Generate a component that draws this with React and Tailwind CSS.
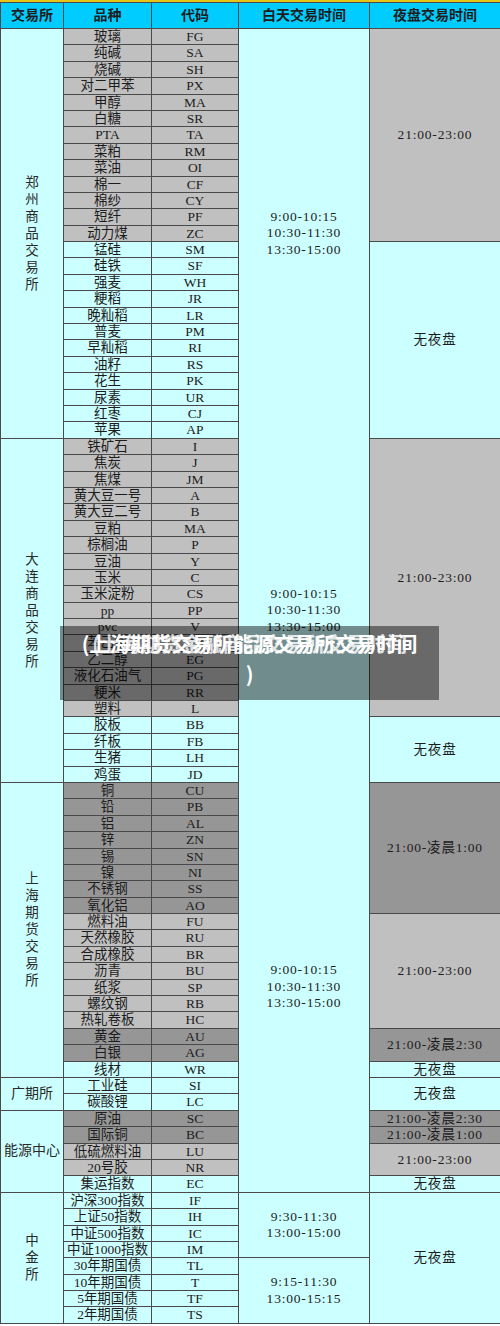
import React from 'react'

const BG = {
  g: 'bg-[#c0c0c0]',
  d: 'bg-[#969696]',
  c: 'bg-[#ccffff]',
}

const EXCHANGES = [
  {
    name: '郑州商品交易所',
    vertical: true,
    rows: [
      ['玻璃', 'FG', 'g'], ['纯碱', 'SA', 'g'], ['烧碱', 'SH', 'g'], ['对二甲苯', 'PX', 'g'],
      ['甲醇', 'MA', 'g'], ['白糖', 'SR', 'g'], ['PTA', 'TA', 'g'], ['菜粕', 'RM', 'g'],
      ['菜油', 'OI', 'g'], ['棉一', 'CF', 'g'], ['棉纱', 'CY', 'g'], ['短纤', 'PF', 'g'],
      ['动力煤', 'ZC', 'g'], ['锰硅', 'SM', 'c'], ['硅铁', 'SF', 'c'], ['强麦', 'WH', 'c'],
      ['粳稻', 'JR', 'c'], ['晚籼稻', 'LR', 'c'], ['普麦', 'PM', 'c'], ['早籼稻', 'RI', 'c'],
      ['油籽', 'RS', 'c'], ['花生', 'PK', 'c'], ['尿素', 'UR', 'c'], ['红枣', 'CJ', 'c'],
      ['苹果', 'AP', 'c'],
    ],
  },
  {
    name: '大连商品交易所',
    vertical: true,
    rows: [
      ['铁矿石', 'I', 'g'], ['焦炭', 'J', 'g'], ['焦煤', 'JM', 'g'], ['黄大豆一号', 'A', 'g'],
      ['黄大豆二号', 'B', 'g'], ['豆粕', 'MA', 'g'], ['棕榈油', 'P', 'g'], ['豆油', 'Y', 'g'],
      ['玉米', 'C', 'g'], ['玉米淀粉', 'CS', 'g'], ['pp', 'PP', 'g'], ['pvc', 'V', 'g'],
      ['苯乙烯', 'EB', 'g'], ['乙二醇', 'EG', 'g'], ['液化石油气', 'PG', 'g'], ['粳米', 'RR', 'g'],
      ['塑料', 'L', 'g'], ['胶板', 'BB', 'c'], ['纤板', 'FB', 'c'], ['生猪', 'LH', 'c'],
      ['鸡蛋', 'JD', 'c'],
    ],
  },
  {
    name: '上海期货交易所',
    vertical: true,
    rows: [
      ['铜', 'CU', 'd'], ['铅', 'PB', 'd'], ['铝', 'AL', 'd'], ['锌', 'ZN', 'd'],
      ['锡', 'SN', 'd'], ['镍', 'NI', 'd'], ['不锈钢', 'SS', 'd'], ['氧化铝', 'AO', 'd'],
      ['燃料油', 'FU', 'g'], ['天然橡胶', 'RU', 'g'], ['合成橡胶', 'BR', 'g'], ['沥青', 'BU', 'g'],
      ['纸浆', 'SP', 'g'], ['螺纹钢', 'RB', 'g'], ['热轧卷板', 'HC', 'g'], ['黄金', 'AU', 'd'],
      ['白银', 'AG', 'd'], ['线材', 'WR', 'c'],
    ],
  },
  {
    name: '广期所',
    vertical: false,
    rows: [['工业硅', 'SI', 'c'], ['碳酸锂', 'LC', 'c']],
  },
  {
    name: '能源中心',
    vertical: false,
    rows: [
      ['原油', 'SC', 'd'], ['国际铜', 'BC', 'd'], ['低硫燃料油', 'LU', 'g'], ['20号胶', 'NR', 'g'],
      ['集运指数', 'EC', 'c'],
    ],
  },
  {
    name: '中金所',
    vertical: true,
    rows: [
      ['沪深300指数', 'IF', 'c'], ['上证50指数', 'IH', 'c'], ['中证500指数', 'IC', 'c'],
      ['中证1000指数', 'IM', 'c'], ['30年期国债', 'TL', 'c'], ['10年期国债', 'T', 'c'],
      ['5年期国债', 'TF', 'c'], ['2年期国债', 'TS', 'c'],
    ],
  },
]

const DAY_TIME = ['9:00-10:15', '10:30-11:30', '13:30-15:00']

// day column merged cells, keyed by the row they start on
const DAY = {
  0: { span: 25, lines: DAY_TIME, edge: 'border-b-0' },
  25: { span: 21, lines: DAY_TIME, edge: 'border-y-0' },
  46: { span: 25, lines: DAY_TIME, edge: 'border-t-0' },
  71: { span: 4, lines: ['9:30-11:30', '13:00-15:00'], edge: '' },
  75: { span: 4, lines: ['9:15-11:30', '13:00-15:15'], edge: '' },
}

const NIGHT = {
  0: { span: 13, bg: 'g', text: '21:00-23:00' },
  13: { span: 12, bg: 'c', text: '无夜盘' },
  25: { span: 17, bg: 'g', text: '21:00-23:00' },
  42: { span: 4, bg: 'c', text: '无夜盘' },
  46: { span: 8, bg: 'd', text: '21:00-凌晨1:00' },
  54: { span: 7, bg: 'g', text: '21:00-23:00' },
  61: { span: 2, bg: 'd', text: '21:00-凌晨2:30' },
  63: { span: 1, bg: 'c', text: '无夜盘' },
  64: { span: 2, bg: 'c', text: '无夜盘' },
  66: { span: 1, bg: 'd', text: '21:00-凌晨2:30' },
  67: { span: 1, bg: 'd', text: '21:00-凌晨1:00' },
  68: { span: 2, bg: 'g', text: '21:00-23:00' },
  70: { span: 1, bg: 'c', text: '无夜盘' },
  71: { span: 8, bg: 'c', text: '无夜盘' },
}

const cell = 'border border-[#4a4a4a] p-0 text-center align-middle'
const serif = { fontFamily: '"Liberation Serif", "Noto Sans CJK SC", serif' }

// fixed-height box so the row keeps its 16.4px pitch whatever the glyph metrics
const Line = ({ children, className = '' }) => (
  <div className={`h-[15.4px] leading-[16.6px] whitespace-nowrap ${className}`}>{children}</div>
)

const App = () => {
  const rows = []
  let idx = 0
  EXCHANGES.forEach((ex) => {
    ex.rows.forEach((r, i) => {
      rows.push({ idx, name: r[0], code: r[1], bg: r[2], ex: i === 0 ? ex : null })
      idx++
    })
  })

  return (
    <div className="relative w-[500px] bg-white text-[#1c1c1c]" style={serif}>
      <div className="h-[2px] bg-[#e6c619]" />
      <table className="w-[500px] table-fixed border-collapse text-[13.5px]">
        <colgroup>
          <col className="w-[63px]" />
          <col className="w-[88px]" />
          <col className="w-[87px]" />
          <col className="w-[131px]" />
          <col className="w-[131px]" />
        </colgroup>
        <thead>
          <tr className="bg-[#00ccff] font-bold text-[14px]">
            <th className={cell}><div className="h-[25px] leading-[26px]">交易所</div></th>
            <th className={cell}><div className="h-[25px] leading-[26px]">品种</div></th>
            <th className={cell}><div className="h-[25px] leading-[26px]">代码</div></th>
            <th className={cell}><div className="h-[25px] leading-[26px]">白天交易时间</div></th>
            <th className={cell}><div className="h-[25px] leading-[26px]">夜盘交易时间</div></th>
          </tr>
        </thead>
        <tbody>
          {rows.map((r) => {
            const day = DAY[r.idx]
            const night = NIGHT[r.idx]
            return (
              <tr key={r.idx}>
                {r.ex && (
                  <td rowSpan={r.ex.rows.length} className={`${cell} bg-[#ccffff] text-[#2a2a2a]`}>
                    {r.ex.vertical ? (
                      <div className="flex flex-col items-center leading-[17px]">
                        {r.ex.name.split('').map((ch, k) => (
                          <span key={k}>{ch}</span>
                        ))}
                      </div>
                    ) : (
                      <span className="text-[14px] leading-[16px]">{r.ex.name}</span>
                    )}
                  </td>
                )}
                <td className={`${cell} ${BG[r.bg]}`}>
                  <Line>{r.name}</Line>
                </td>
                <td className={`${cell} ${BG[r.bg]}`}>
                  <Line>{r.code}</Line>
                </td>
                {day && (
                  <td rowSpan={day.span} className={`${cell} ${day.edge} bg-[#ccffff]`}>
                    <div className="flex flex-col items-center leading-[16.5px] tracking-[0.8px]">
                      {day.lines.map((l) => (
                        <span key={l}>{l}</span>
                      ))}
                    </div>
                  </td>
                )}
                {night && (
                  <td rowSpan={night.span} className={`${cell} ${BG[night.bg]}`}>
                    <Line className="tracking-[0.8px]">{night.text}</Line>
                  </td>
                )}
              </tr>
            )
          })}
        </tbody>
      </table>

      {/* caption strip lying over the table */}
      <div
        className="absolute left-[60px] top-[626px] w-[379px] h-[74px] bg-black/45 px-5 pt-[2px] text-center text-white font-bold text-[20.5px] leading-[30px]"
        style={{ fontFamily: '"Noto Sans CJK SC", "Noto Sans", sans-serif' }}
      >
        <div className="relative">
          <div>
            (上海期货交易所能源交易所交易时间
            <br />)
          </div>
          <div className="absolute inset-0 opacity-80">
            (上海期货金融商品交易所交易时间
          </div>
        </div>
      </div>
    </div>
  )
}

export default App
